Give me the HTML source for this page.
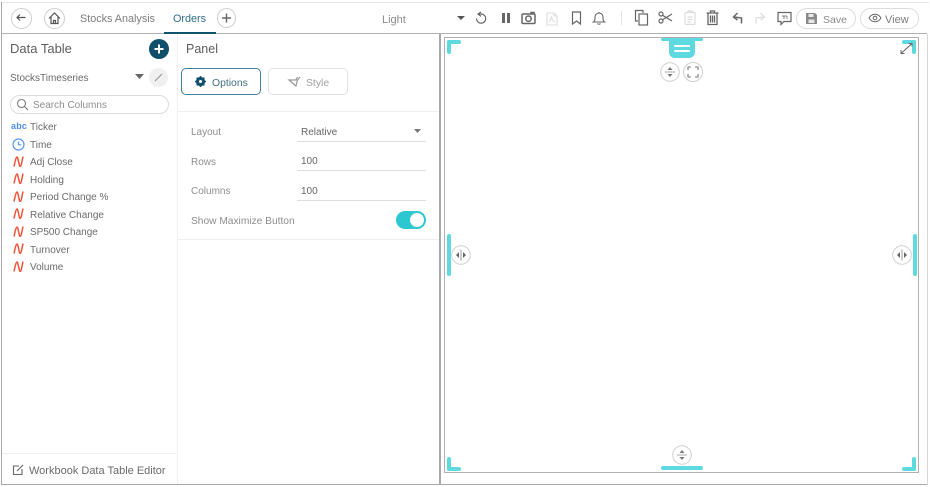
<!DOCTYPE html>
<html>
<head>
<meta charset="utf-8">
<style>
html,body{margin:0;padding:0;background:#fff}
#p{position:relative;width:930px;height:487px;overflow:hidden;background:#fff;font-family:"Liberation Sans",sans-serif;color:#6b6b6b;font-size:10.5px;filter:blur(.35px)}
.t{position:absolute;white-space:nowrap;line-height:14px}
.b{position:absolute}
.c{position:absolute;border:1px solid #cfcfcf;border-radius:50%;background:#fff;box-sizing:border-box}
.i{position:absolute;overflow:visible}
.cy{position:absolute;background:#5fd9e0;border-radius:2px}
</style>
</head>
<body>
<div id="p">
<!-- frame -->
<div class="b" style="left:1px;top:2px;width:928px;height:1px;background:#e6e6e6"></div>
<div class="b" style="left:1px;top:2px;width:1px;height:483px;background:#a8a8a8"></div>
<div class="b" style="left:1px;top:33px;width:926px;height:1px;background:#b0b0b0"></div>
<div class="b" style="left:1px;top:484px;width:926px;height:1px;background:#a8a8a8"></div>
<div class="b" style="left:927px;top:34px;width:1px;height:451px;background:#d8d8d8"></div>
<div class="b" style="left:177px;top:34px;width:1px;height:450px;background:#f0f0f0"></div>
<div class="b" style="left:439px;top:34px;width:2px;height:450px;background:#a8a8a8"></div>
<div class="b" style="left:444px;top:37px;width:475px;height:436px;border:1px solid #b0b0b0;box-sizing:border-box"></div>
<div class="b" style="left:178px;top:111px;width:261px;height:1px;background:#efefef"></div>
<div class="b" style="left:178px;top:239px;width:261px;height:1px;background:#efefef"></div>
<div class="b" style="left:2px;top:453px;width:175px;height:1px;background:#efefef"></div>

<!-- top left -->
<div class="c" style="left:11px;top:8px;width:21px;height:21px"></div>
<svg class="i" style="left:11px;top:8px" width="21" height="21" fill="none" stroke="#555" stroke-width="1.2"><path d="M14.500 9.500H6M9 6.500L6 9.500 9 12.500"/></svg>
<div class="c" style="left:44px;top:8px;width:21px;height:21px"></div>
<svg class="i" style="left:44px;top:8px" width="21" height="21" fill="none" stroke="#555" stroke-width="1.2"><path d="M5 10.500L10.500 5 16 10.500M7 9v6.500h7V9M9.500 15.500v-3h2v3"/></svg>
<div class="t" style="left:80px;top:12px;font-size:10.8px;color:#7d7d7d">Stocks Analysis</div>
<div class="t" style="left:173px;top:12px;font-size:10.8px;color:#2f6b85">Orders</div>
<div class="b" style="left:164px;top:32px;width:52px;height:2px;background:#0f5570"></div>
<div class="c" style="left:217px;top:8px;width:19px;height:20px"></div>
<svg class="i" style="left:217px;top:8px" width="19" height="20" fill="none" stroke="#666" stroke-width="1.4"><path d="M9.500 5.500v9M5 10h9"/></svg>

<div class="t" style="left:382px;top:13px;font-size:11px;color:#8a8a8a">Light</div>
<svg class="i" style="left:457px;top:16px" width="9" height="5"><path d="M0 0h8L4 4z" fill="#555"/></svg>
<!-- toolbar icons -->
<svg class="i" style="left:474px;top:11px" width="14" height="14" fill="none" stroke="#666" stroke-width="1.2"><path d="M4 3h3.500a4.600 4.600 0 1 1-5 4.500"/><path d="M7 1L4 3l3 2.400" /></svg>
<div class="b" style="left:502px;top:13px;width:3px;height:10px;background:#666"></div>
<div class="b" style="left:507px;top:13px;width:3px;height:10px;background:#666"></div>
<svg class="i" style="left:521px;top:11px" width="15" height="14" fill="none" stroke="#666" stroke-width="1.500"><rect x="1" y="3" width="13" height="9.500" rx="1"/><circle cx="7.500" cy="7.700" r="2.700"/><path d="M10 3V1.500h3V3"/></svg>
<svg class="i" style="left:546px;top:12px" width="12" height="14" fill="none" stroke="#dcdcdc" stroke-width="1.100"><path d="M1 1h7l3 3v9H1zM8 1v3h3M3.500 10l2-5 1.500 4 2 1"/></svg>
<svg class="i" style="left:571px;top:11px" width="11" height="14" fill="none" stroke="#666" stroke-width="1.200"><path d="M1.500 1h8v12L5.500 10l-4 3z"/></svg>
<svg class="i" style="left:592px;top:11px" width="14" height="14" fill="none" stroke="#666" stroke-width="1.100"><path d="M1.500 11c1.500-1 1.500-2.500 1.500-5a4 4 0 0 1 8 0c0 2.500 0 4 1.500 5zM5.500 12.500c.5 1 2.500 1 3 0M7 1v1"/></svg>
<div class="b" style="left:621px;top:11px;width:1px;height:14px;background:#e4e4e4"></div>
<svg class="i" style="left:634px;top:9px" width="15" height="17" fill="none" stroke="#666" stroke-width="1.200"><path d="M4 12H1.500V1.500H9V4"/><rect x="5" y="5" width="8.500" height="11"/></svg>
<svg class="i" style="left:658px;top:11px" width="15" height="13" fill="none" stroke="#666" stroke-width="1.200"><circle cx="3" cy="3" r="2"/><circle cx="3" cy="10" r="2"/><path d="M4.500 4.200L14 10M4.500 8.800L14 3"/></svg>
<svg class="i" style="left:684px;top:10px" width="12" height="15" fill="none" stroke="#dcdcdc" stroke-width="1.200"><rect x="1" y="2.500" width="10" height="12" rx="1"/><path d="M4 2.500V1h4v1.500M3.500 7h5M3.500 9.500h5M3.500 12h3"/></svg>
<svg class="i" style="left:706px;top:10px" width="13" height="15" fill="none" stroke="#666" stroke-width="1.300"><path d="M.5 3h12M4.500 3V1h4v2M2 3v11.500h9V3M4.500 5.500v7M6.500 5.500v7M8.500 5.500v7"/></svg>
<svg class="i" style="left:732px;top:12px" width="11" height="12" fill="none" stroke="#666" stroke-width="1.500"><path d="M9.500 11.500V6L2 5M5.500 1L1.500 5l4 3"/></svg>
<svg class="i" style="left:755px;top:12px" width="11" height="12" fill="none" stroke="#dedede" stroke-width="1.300"><path d="M1 11.500V6l8-1M5.500 1l4 4-4 3"/></svg>
<svg class="i" style="left:777px;top:11px" width="15" height="15" fill="none" stroke="#666" stroke-width="1.200"><path d="M1 1.500h13v9H7l-3 3v-3H1z"/><path d="M5 5h5M7 5v3M10 5v3" stroke-width=".8"/></svg>
<div class="b" style="left:796px;top:8px;width:60px;height:21px;border:1px solid #dcdcdc;border-radius:11px;box-sizing:border-box"></div>
<svg class="i" style="left:805px;top:12px" width="13" height="13"><path d="M1 1h9l2 2v9H1z" fill="#8a8a8a"/><rect x="3.500" y="2" width="5" height="3" fill="#e8e8e8"/><rect x="3.500" y="7.500" width="6" height="3.500" fill="#e8e8e8"/></svg>
<div class="t" style="left:823px;top:13px;color:#8a8a8a">Save</div>
<div class="b" style="left:860px;top:8px;width:59px;height:21px;border:1px solid #dcdcdc;border-radius:11px;box-sizing:border-box"></div>
<svg class="i" style="left:868px;top:13px" width="14" height="10" fill="none" stroke="#666" stroke-width="1"><path d="M1 5c3-5 9-5 12 0-3 5-9 5-12 0z"/><circle cx="7" cy="5" r="1.800"/></svg>
<div class="t" style="left:885px;top:13px;font-size:11px;color:#7d7d7d">View</div>

<!-- sidebar -->
<div class="t" style="left:10px;top:42px;font-size:13px;color:#5d5d5d">Data Table</div>
<div class="b" style="left:149px;top:39px;width:20px;height:20px;border-radius:50%;background:#0f4f6b"></div>
<svg class="i" style="left:149px;top:39px" width="20" height="20" fill="none" stroke="#fff" stroke-width="2"><path d="M10 5.500v9M5.500 10h9"/></svg>
<div class="t" style="left:10px;top:72px;font-size:10px;color:#6b6b6b">StocksTimeseries</div>
<svg class="i" style="left:135px;top:74px" width="10" height="6"><path d="M0 0h9L4.500 5z" fill="#666"/></svg>
<div class="b" style="left:149px;top:68px;width:19px;height:19px;border-radius:50%;background:#f0f0f0"></div>
<svg class="i" style="left:149px;top:68px" width="19" height="19" fill="none" stroke="#9a9a9a" stroke-width="1.200"><path d="M6 13l7-7"/></svg>
<div class="b" style="left:10px;top:95px;width:159px;height:19px;border:1px solid #dcdcdc;border-radius:10px;box-sizing:border-box"></div>
<svg class="i" style="left:16px;top:98px" width="13" height="13" fill="none" stroke="#777" stroke-width="1.100"><circle cx="5.500" cy="5.500" r="4"/><path d="M8.500 8.500L12 12"/></svg>
<div class="t" style="left:33px;top:99px;font-size:10px;color:#8e8e8e">Search Columns</div>

<div class="t" style="left:11px;top:119px;font-size:9px;font-weight:bold;color:#4d8fe8;letter-spacing:.2px">abc</div>
<div class="t" style="left:30px;top:121px;font-size:10px">Ticker</div>
<svg class="i" style="left:12px;top:138px" width="13" height="13" fill="none" stroke="#5b97ea" stroke-width="1.200"><circle cx="6.500" cy="6.500" r="5.500"/><path d="M6.500 3.500v3.300h2.800"/></svg>
<div class="t" style="left:30px;top:139px;font-size:10px">Time</div>
<svg width="0" height="0" style="position:absolute"><defs><symbol id="n" viewBox="0 0 11 11"><path d="M1 10.500C2 6 3 1 4 1c1.200 0 2 9.500 3.200 9.500C8.200 10.500 9 5 10 .5" fill="none" stroke="#f0553a" stroke-width="1.500"/></symbol></defs></svg>
<svg class="i" style="left:13px;top:156px" width="11" height="11"><use href="#n"/></svg>
<div class="t" style="left:30px;top:156px;font-size:10px">Adj Close</div>
<svg class="i" style="left:13px;top:173px" width="11" height="11"><use href="#n"/></svg>
<div class="t" style="left:30px;top:174px;font-size:10px">Holding</div>
<svg class="i" style="left:13px;top:191px" width="11" height="11"><use href="#n"/></svg>
<div class="t" style="left:30px;top:191px;font-size:10px">Period Change %</div>
<svg class="i" style="left:13px;top:208px" width="11" height="11"><use href="#n"/></svg>
<div class="t" style="left:30px;top:209px;font-size:10px">Relative Change</div>
<svg class="i" style="left:13px;top:226px" width="11" height="11"><use href="#n"/></svg>
<div class="t" style="left:30px;top:226px;font-size:10px">SP500 Change</div>
<svg class="i" style="left:13px;top:243px" width="11" height="11"><use href="#n"/></svg>
<div class="t" style="left:30px;top:244px;font-size:10px">Turnover</div>
<svg class="i" style="left:13px;top:261px" width="11" height="11"><use href="#n"/></svg>
<div class="t" style="left:30px;top:261px;font-size:10px">Volume</div>

<svg class="i" style="left:12px;top:464px" width="12" height="12" fill="none" stroke="#666" stroke-width="1.100"><path d="M7 2H1.500v8.500H10V5M5 7l6-6"/></svg>
<div class="t" style="left:29px;top:464px;font-size:11px">Workbook Data Table Editor</div>

<!-- panel -->
<div class="t" style="left:186px;top:42px;font-size:12.500px;color:#5d5d5d">Panel</div>
<div class="b" style="left:181px;top:68px;width:80px;height:27px;border:1px solid #3f7f9a;border-radius:5px;box-sizing:border-box"></div>
<svg class="i" style="left:195px;top:76px" width="11" height="11"><circle cx="5.500" cy="5.500" r="3.500" fill="none" stroke="#0f4f6b" stroke-width="2.200"/><path d="M5.500 0v11M0 5.500h11M1.700 1.700l7.600 7.600M9.300 1.700L1.700 9.300" stroke="#0f4f6b" stroke-width="1.500"/><circle cx="5.500" cy="5.500" r="1.500" fill="#fff"/></svg>
<div class="t" style="left:212px;top:77px;font-size:10.400px;color:#44707f">Options</div>
<div class="b" style="left:268px;top:68px;width:80px;height:27px;border:1px solid #e2e2e2;border-radius:5px;box-sizing:border-box"></div>
<svg class="i" style="left:288px;top:76px" width="13" height="11" fill="none" stroke="#9a9a9a" stroke-width="1.200"><path d="M1 4l7 6 1.500-6zM9.500 4L12 1M8 3.500L9.500 1"/></svg>
<div class="t" style="left:306px;top:77px;font-size:10.400px;color:#a0a0a0">Style</div>

<div class="t" style="left:191px;top:126px;font-size:10px;color:#8e8e8e">Layout</div>
<div class="t" style="left:301px;top:126px;font-size:10px;color:#666">Relative</div>
<svg class="i" style="left:414px;top:129px" width="8" height="5"><path d="M0 0h7L3.500 4z" fill="#777"/></svg>
<div class="b" style="left:297px;top:141px;width:129px;height:1px;background:#dedede"></div>
<div class="t" style="left:191px;top:156px;font-size:10px;color:#8e8e8e">Rows</div>
<div class="t" style="left:301px;top:155px;font-size:10px;color:#666">100</div>
<div class="b" style="left:297px;top:170px;width:129px;height:1px;background:#dedede"></div>
<div class="t" style="left:191px;top:185px;font-size:10px;color:#8e8e8e">Columns</div>
<div class="t" style="left:301px;top:185px;font-size:10px;color:#666">100</div>
<div class="b" style="left:297px;top:200px;width:129px;height:1px;background:#dedede"></div>
<div class="t" style="left:191px;top:215px;font-size:10.200px;color:#8e8e8e">Show Maximize Button</div>
<div class="b" style="left:396px;top:211px;width:30px;height:18px;border-radius:9px;background:#2cc8cf"></div>
<div class="b" style="left:410px;top:213px;width:14px;height:14px;border-radius:50%;background:#fff"></div>

<!-- canvas handles -->
<div class="cy" style="left:447px;top:40px;width:14px;height:4px"></div>
<div class="cy" style="left:447px;top:40px;width:4px;height:14px"></div>
<div class="cy" style="left:902px;top:40px;width:14px;height:4px"></div>
<div class="cy" style="left:912px;top:40px;width:4px;height:14px"></div>
<div class="cy" style="left:447px;top:457px;width:4px;height:14px"></div>
<div class="cy" style="left:447px;top:467px;width:14px;height:4px"></div>
<div class="cy" style="left:912px;top:457px;width:4px;height:14px"></div>
<div class="cy" style="left:902px;top:467px;width:14px;height:4px"></div>
<div class="cy" style="left:661px;top:38px;width:42px;height:3px"></div>
<div class="b" style="left:669px;top:39px;width:26px;height:19px;background:#5fd9e0;border-radius:0 0 6px 6px"></div>
<div class="b" style="left:674px;top:45px;width:16px;height:2px;background:#fff;border-radius:1px"></div>
<div class="b" style="left:674px;top:50px;width:16px;height:2px;background:#fff;border-radius:1px"></div>
<div class="cy" style="left:661px;top:466px;width:42px;height:4px"></div>
<div class="cy" style="left:447px;top:234px;width:4px;height:42px"></div>
<div class="cy" style="left:913px;top:234px;width:4px;height:42px"></div>

<svg width="0" height="0" style="position:absolute"><defs>
<symbol id="v" viewBox="0 0 20 20"><circle cx="10" cy="10" r="9.300" fill="#fff" stroke="#d0d0d0"/><path d="M5 10h10" stroke="#aaa" stroke-width="1"/><path d="M7.500 8L10 5l2.500 3zM7.500 12l2.500 3 2.500-3z" fill="#777"/></symbol>
<symbol id="h" viewBox="0 0 20 20"><circle cx="10" cy="10" r="9.300" fill="#fff" stroke="#d0d0d0"/><path d="M10 4.500v11" stroke="#999" stroke-width="1"/><path d="M8 7v6L5 10zM12 7v6l3-3z" fill="#666"/></symbol>
</defs></svg>
<svg class="i" style="left:660px;top:62px" width="20" height="20"><use href="#v"/></svg>
<div class="c" style="left:683px;top:62px;width:20px;height:20px"></div>
<svg class="i" style="left:683px;top:62px" width="20" height="20" fill="none" stroke="#777" stroke-width="1.100"><path d="M5 8V5h3M12 5h3v3M15 12v3h-3M8 15H5v-3"/></svg>
<svg class="i" style="left:672px;top:445px" width="20" height="20"><use href="#v"/></svg>
<svg class="i" style="left:451px;top:245px" width="20" height="20"><use href="#h"/></svg>
<svg class="i" style="left:892px;top:245px" width="20" height="20"><use href="#h"/></svg>
<svg class="i" style="left:900px;top:43px" width="13" height="11" fill="none" stroke="#666" stroke-width="1"><path d="M1 10.500L12 .5M8.500 .5H12v3M1 7v3.500h3.500"/></svg>
</div>
</body>
</html>
